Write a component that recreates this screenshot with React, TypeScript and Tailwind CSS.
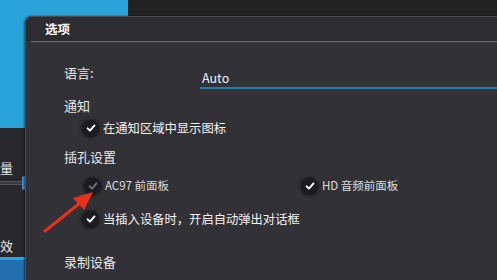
import React from 'react';

const font = { fontFamily: '"Noto Sans CJK SC", "Noto Sans", sans-serif' };

const Check = ({ dim = false }: { dim?: boolean }) => (
  <span className="flex h-[17px] w-[17px] shrink-0 items-center justify-center rounded-full bg-[#1c1b20] shadow-[0_0_3px_1px_rgba(0,0,0,0.45)]">
    <svg width="10" height="10" viewBox="0 0 10 10">
      <path
        d="M1.6 5.3 L4 7.7 L8.5 2.4"
        fill="none"
        stroke={dim ? '#6f6f74' : '#ffffff'}
        strokeWidth="1.9"
        strokeLinecap="round"
        strokeLinejoin="round"
      />
    </svg>
  </span>
);

const Option = ({ label, dim = false, small = false }: { label: string; dim?: boolean; small?: boolean }) => (
  <div className="flex h-[22px] items-center gap-[4px]">
    <Check dim={dim} />
    <span className={small ? 'text-[11.5px] text-[#dcdcdc]' : 'text-[12.3px] text-[#f2f2f2]'}>{label}</span>
  </div>
);

const App = () => {
  return (
    <div className="relative h-[280px] w-[497px] overflow-hidden bg-[#222222]" style={font}>
      {/* app behind the dialog */}
      <div className="flex h-full">
        <div className="flex w-[128px] flex-col">
          <div className="h-[128px] bg-[#2aa2da]" />
          <div className="flex flex-1 flex-col bg-[#28282c]">
            <div className="ml-[-13px] mt-[31px] text-[13px] leading-[18px] text-[#e6e6e6]">音量</div>
            <div className="flex h-[12px] items-center">
              <div className="h-[4px] w-[22px] border-y border-[#555] bg-[#3a3a3e]" />
              <div className="h-[14px] w-[5px] rounded-[2px] bg-[#3b8fd0]" />
            </div>
            <div className="ml-[-13px] mt-[48px] text-[13px] leading-[18px] text-[#e6e6e6]">音效</div>
            <div className="mt-[2px] h-[3px] bg-[#2aa4e0]" />
            <div className="flex-1 bg-[#2170ad]" />
          </div>
        </div>
        <div className="flex-1" />
      </div>

      {/* options dialog */}
      <div className="absolute left-[25px] top-[16px] h-[300px] w-[500px] rounded-tl-[7px] border-l border-t border-[#4a4a50] bg-[#323136] shadow-[-1px_0_2px_rgba(0,0,0,0.5)]">
        <div className="flex h-[24px] items-center rounded-tl-[7px] bg-[#2d2c31] pl-[19px] text-[12.5px] font-bold text-white">
          选项
        </div>
        <div className="ml-[5px] h-[2px] border-t border-[#6c6c70] bg-[#3a393e]" />
        <div className="pl-[38px] pt-[19px] text-[13px] text-[#e8e8e8]">
          <div className="flex h-[28px] items-start">
            <span className="w-[136px] leading-[22px]">语言:</span>
            <div className="flex h-[27px] flex-1 items-end border-b-2 border-[#2180b4] pb-[1px] pl-[2px] text-[12.5px] leading-[16px] text-[#f2f2f2]">
              Auto
            </div>
          </div>
          <div className="mt-[5px] leading-[22px]">通知</div>
          <div className="ml-[18px]">
            <Option label="在通知区域中显示图标" />
          </div>
          <div className="mt-[7px] leading-[22px]">插孔设置</div>
          <div className="ml-[20px] mt-[7px] flex">
            <div className="w-[217px]">
              <Option label="AC97 前面板" dim small />
            </div>
            <Option label="HD 音频前面板" small />
          </div>
          <div className="ml-[18px] mt-[11px]">
            <Option label="当插入设备时，开启自动弹出对话框" />
          </div>
          <div className="mt-[21px] leading-[22px]">录制设备</div>
        </div>
      </div>

      {/* red annotation arrow */}
      <svg className="absolute left-0 top-0" width="497" height="280" viewBox="0 0 497 280">
        <path d="M45 231 L80 203" stroke="#e8301c" strokeWidth="3.2" strokeLinecap="round" />
        <polygon points="93,192 73,198 84,210" fill="#e8301c" />
      </svg>
    </div>
  );
};

export default App;
